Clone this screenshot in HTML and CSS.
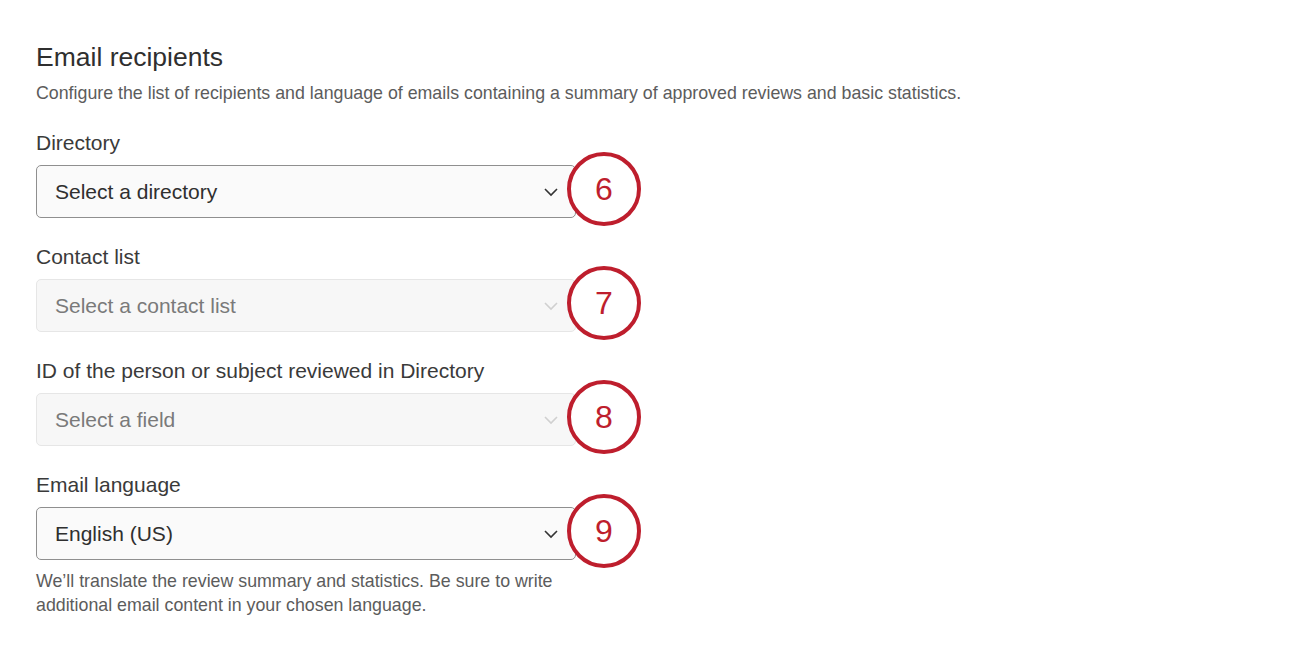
FILE: index.html
```
<!DOCTYPE html>
<html lang="en">
<head>
<meta charset="utf-8">
<title>Email recipients</title>
<link rel="stylesheet" href="styles.css">
</head>
<body>
<main class="panel">
  <h1 class="title">Email recipients</h1>
  <p class="desc">Configure the list of recipients and language of emails containing a summary of approved reviews and basic statistics.</p>

  <div class="field">
    <div class="label">Directory</div>
    <div class="row">
      <div class="select">
        <span class="value">Select a directory</span>
        <svg class="chev" width="16" height="10" viewBox="0 0 16 10"><path d="M2 2l6 6 6-6" fill="none" stroke="currentColor" stroke-width="1.6"/></svg>
      </div>
      <div class="badge">6</div>
    </div>
  </div>

  <div class="field">
    <div class="label">Contact list</div>
    <div class="row">
      <div class="select disabled">
        <span class="value">Select a contact list</span>
        <svg class="chev" width="16" height="10" viewBox="0 0 16 10"><path d="M2 2l6 6 6-6" fill="none" stroke="currentColor" stroke-width="1.6"/></svg>
      </div>
      <div class="badge">7</div>
    </div>
  </div>

  <div class="field">
    <div class="label">ID of the person or subject reviewed in Directory</div>
    <div class="row">
      <div class="select disabled">
        <span class="value">Select a field</span>
        <svg class="chev" width="16" height="10" viewBox="0 0 16 10"><path d="M2 2l6 6 6-6" fill="none" stroke="currentColor" stroke-width="1.6"/></svg>
      </div>
      <div class="badge">8</div>
    </div>
  </div>

  <div class="field">
    <div class="label">Email language</div>
    <div class="row">
      <div class="select">
        <span class="value">English (US)</span>
        <svg class="chev" width="16" height="10" viewBox="0 0 16 10"><path d="M2 2l6 6 6-6" fill="none" stroke="currentColor" stroke-width="1.6"/></svg>
      </div>
      <div class="badge">9</div>
    </div>
    <p class="help">We’ll translate the review summary and statistics. Be sure to write additional email content in your chosen language.</p>
  </div>
</main>
</body>
</html>
```

FILE: styles.css
```
html, body {
  margin: 0;
  padding: 0;
  background: #ffffff;
}
body {
  font-family: "Liberation Sans", Arial, sans-serif;
  color: #333333;
}
.panel {
  padding: 41px 0 0 36px;
}
.title {
  margin: 0;
  font-size: 26.5px;
  line-height: 32px;
  font-weight: 400;
  color: #2f2f2f;
}
.desc {
  margin: 8px 0 0 0;
  font-size: 17.8px;
  line-height: 24px;
  color: #5c5c5c;
}
.field {
  margin-top: 24px;
}
.field + .field {
  margin-top: 25px;
}
.label {
  font-size: 21px;
  line-height: 28px;
  color: #3a3a3a;
}
.row {
  position: relative;
  margin-top: 8px;
  width: 540px;
}
.select {
  box-sizing: border-box;
  width: 540px;
  height: 53px;
  border: 1px solid #8f8f8f;
  border-radius: 5px;
  background: #fafafa;
  display: flex;
  align-items: center;
  justify-content: space-between;
  padding: 0 16px 0 18px;
  color: #2f2f2f;
  font-size: 21px;
}
.select.disabled {
  border-color: #e6e6e6;
  background: #f7f7f7;
  color: #7a7a7a;
}
.chev {
  color: #333333;
}
.select.disabled .chev {
  color: #d0d0d0;
}
.badge {
  position: absolute;
  left: 531px;
  top: -13px;
  width: 74px;
  height: 74px;
  box-sizing: border-box;
  border: 4px solid #be1e2d;
  border-radius: 50%;
  background: #ffffff;
  color: #be1e2d;
  font-size: 32px;
  display: flex;
  align-items: center;
  justify-content: center;
}
.help {
  margin: 9px 0 0 0;
  width: 540px;
  font-size: 17.8px;
  line-height: 24px;
  color: #5c5c5c;
}
```
